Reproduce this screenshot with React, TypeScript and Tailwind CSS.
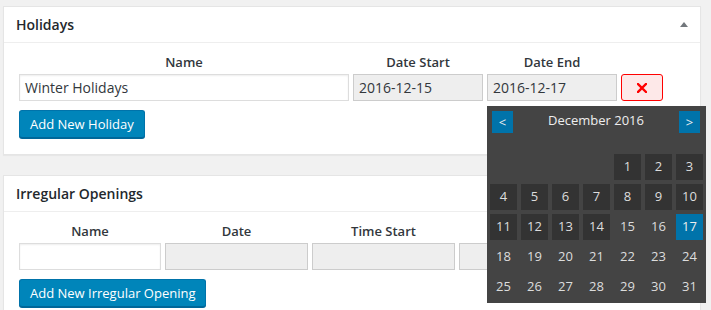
import React from "react";

const font = { fontFamily: '"Open Sans", "Noto Sans", sans-serif' };

function Arrow() {
  return (
    <svg width="8" height="5" viewBox="0 0 8 5" className="block">
      <path d="M0 5 L4 0 L8 5 Z" fill="#72777c" />
    </svg>
  );
}

function Panel({ title, children }: { title: string; children: React.ReactNode }) {
  return (
    <div className="ml-[3px] w-[698px] border border-[#e5e5e5] bg-white shadow-[0_1px_1px_rgba(0,0,0,0.04)]">
      <div className="flex h-[36px] items-center justify-between border-b border-[#eee] px-[12px]">
        <h2 className="text-[14px] font-semibold leading-[19px] text-[#23282d]">{title}</h2>
        <Arrow />
      </div>
      <div className="px-[15px] pb-[16px] pt-[10px]">{children}</div>
    </div>
  );
}

function Label({ children }: { children?: React.ReactNode }) {
  return (
    <div className="h-[18px] text-center text-[13px] font-semibold leading-[18px] text-[#32373c]">
      {children}
    </div>
  );
}

function TextInput({ value, readOnly }: { value?: string; readOnly?: boolean }) {
  return (
    <div
      className={
        readOnly
          ? "flex h-[27px] items-center border border-[#ccc] bg-[#eee] px-[5px] text-[14px] text-[#32373c]"
          : "flex h-[27px] items-center border border-[#ddd] bg-white px-[5px] text-[14px] text-[#32373c] shadow-[inset_0_1px_2px_rgba(0,0,0,0.07)]"
      }
    >
      {value}
    </div>
  );
}

function BlueButton({ children }: { children: React.ReactNode }) {
  return (
    <button className="h-[28px] rounded-[3px] border border-[#0073aa] border-b-[#006799] bg-[#0085ba] px-[10px] text-[13px] leading-[26px] text-white shadow-[0_1px_0_#006799]">
      {children}
    </button>
  );
}

function DeleteButton() {
  return (
    <div className="flex h-[27px] w-[42px] items-center justify-center rounded-[3px] border border-[#ff0000] bg-[#fde8e8]">
      <svg width="10" height="10" viewBox="0 0 10 10">
        <path d="M1 1 L9 9 M9 1 L1 9" stroke="#ff0000" strokeWidth="2.4" strokeLinecap="square" />
      </svg>
    </div>
  );
}

function DatePicker() {
  const days: (number | null)[] = [null, null, null, null];
  for (let d = 1; d <= 31; d++) days.push(d);
  return (
    <div className="absolute left-[487px] top-[106px] h-[197px] w-[219px] bg-[#444] px-[3px] pb-[3px] pt-[5px]">
      <div className="flex h-[22px] items-center justify-between pl-[2px] pr-[3px]">
        <div className="flex h-[22px] w-[21px] items-center justify-center bg-[#0073aa] text-[13px] leading-none text-[#eee]">
          &lt;
        </div>
        <div className="pb-[3px] text-[13px] text-[#eee]">December 2016</div>
        <div className="flex h-[22px] w-[21px] items-center justify-center bg-[#0073aa] text-[13px] leading-none text-[#eee]">
          &gt;
        </div>
      </div>
      <div className="mb-[4px] h-[17px]" />
      <div className="grid grid-cols-[repeat(7,27px)] grid-rows-[repeat(5,26px)] gap-[4px]">
        {days.map((d, i) => {
          let cls = "flex items-center justify-center text-[13px] text-[#ddd]";
          if (d !== null && d <= 14) cls += " bg-[#333]";
          if (d === 17) cls += " bg-[#0073aa] text-[#eee]";
          return (
            <div key={i} className={cls}>
              {d ?? ""}
            </div>
          );
        })}
      </div>
    </div>
  );
}

export default function App() {
  return (
    <div style={font} className="relative h-[310px] w-[711px] overflow-hidden bg-[#f1f1f1] pt-[6px]">
      <Panel title="Holidays">
        <div className="grid grid-cols-[330px_130px_130px_42px] gap-x-[4px] gap-y-[3px]">
          <Label>Name</Label>
          <Label>Date Start</Label>
          <Label>Date End</Label>
          <div />
          <TextInput value="Winter Holidays" />
          <TextInput value="2016-12-15" readOnly />
          <TextInput value="2016-12-17" readOnly />
          <DeleteButton />
        </div>
        <div className="mt-[9px]">
          <BlueButton>Add New Holiday</BlueButton>
        </div>
      </Panel>
      <div className="h-[20px]" />
      <Panel title="Irregular Openings">
        <div className="grid grid-cols-[142px_143px_143px_143px] gap-x-[4px] gap-y-[3px]">
          <Label>Name</Label>
          <Label>Date</Label>
          <Label>Time Start</Label>
          <Label />
          <TextInput />
          <TextInput readOnly />
          <TextInput readOnly />
          <TextInput readOnly />
        </div>
        <div className="mt-[9px]">
          <BlueButton>Add New Irregular Opening</BlueButton>
        </div>
      </Panel>
      <DatePicker />
    </div>
  );
}
